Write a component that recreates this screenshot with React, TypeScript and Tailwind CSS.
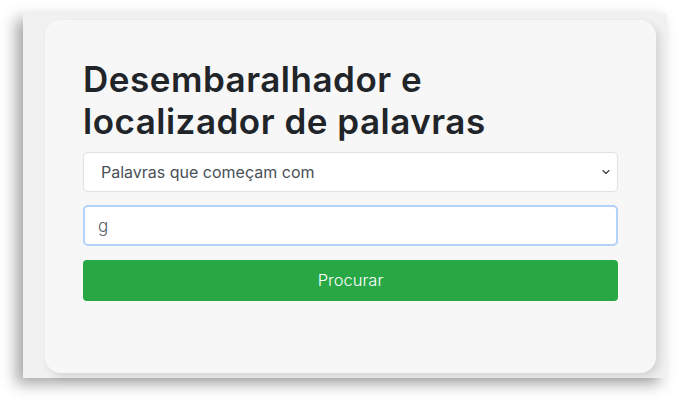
import React, { useState } from "react";

const font = "font-['Inter','Open_Sans',sans-serif]";

const App = () => {
	const [mode, setMode] = useState("comeca");
	const [term, setTerm] = useState("g");

	return (
		<div className={`w-[700px] h-[400px] bg-white overflow-hidden ${font}`}>
			<div className="ml-[23px] mt-[13px] w-[644px] h-[365px] bg-[#f1f1f1] pl-[22px] pt-[7px] shadow-[-7px_6px_14px_rgba(0,0,0,0.35)]">
				<div className="w-[611px] h-[353px] rounded-[16px] bg-[#f7f7f7] px-[38px] pt-[38px] shadow-[4px_4px_8px_rgba(0,0,0,0.12)]">
					<h1 className="text-[35px] leading-[42px] font-semibold text-[#212529] tracking-[0.5px] mb-[10px]">
						Desembaralhador e
						<br />
						localizador de palavras
					</h1>
					<div className="flex flex-col">
						<div className="relative h-[40px] mb-[13px]">
							<select
								value={mode}
								onChange={(e) => setMode(e.target.value)}
								className="appearance-none w-full h-full bg-white border border-[#dee2e6] rounded-[5px] pl-[17px] pr-8 text-[16px] text-[#495057] outline-none"
							>
								<option value="comeca">Palavras que começam com</option>
								<option value="termina">Palavras que terminam com</option>
								<option value="contem">Palavras que contêm</option>
							</select>
							<svg
								className="absolute right-[7px] top-[16px] pointer-events-none"
								width="10"
								height="8"
								viewBox="0 0 16 16"
							>
								<path d="M2 5l6 6 6-6" fill="none" stroke="#343a40" strokeWidth="2.2" strokeLinecap="round" strokeLinejoin="round" />
							</svg>
						</div>
						<input
							value={term}
							onChange={(e) => setTerm(e.target.value)}
							className="h-[41px] w-full bg-white border-2 border-[#b0d2fb] rounded-[5px] px-[13px] text-[17px] font-light text-[#5a6168] outline-none mb-[14px]"
						/>
						<button
							type="button"
							className="h-[41px] w-full bg-[#28a745] rounded-[4px] text-white text-[16.5px] font-light"
						>
							Procurar
						</button>
					</div>
				</div>
			</div>
		</div>
	);
};

export default App;
